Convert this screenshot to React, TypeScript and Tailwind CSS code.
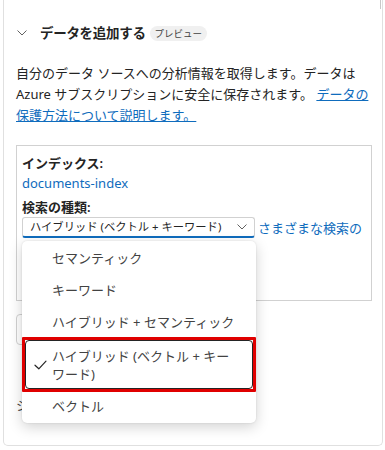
import React from "react";

const font = { fontFamily: '"Noto Sans", "Noto Sans CJK JP", sans-serif' };

function Chevron({ className }: { className?: string }) {
  return (
    <svg className={className} width="10" height="6" viewBox="0 0 10 6" fill="none">
      <path d="M0.8 0.8l4.2 4.2 4.2-4.2" stroke="#616161" strokeWidth="1" strokeLinecap="round" strokeLinejoin="round" />
    </svg>
  );
}

function Check() {
  return (
    <svg width="13" height="10" viewBox="0 0 13 10" fill="none">
      <path d="M1 5.2l3.8 3.6L12 1.2" stroke="#242424" strokeWidth="1.2" strokeLinecap="round" strokeLinejoin="round" />
    </svg>
  );
}

export default function App() {
  return (
    <div className="relative w-[385px] h-[450px] bg-white overflow-hidden text-[#242424]" style={font}>
      <div className="absolute left-[380px] top-0 w-px h-[9px] bg-[#c8c8c8]" />
      <div className="ml-[3px] w-[380px] h-[446px] border-x border-b border-[#e0e0e0] rounded-b-[5px] pl-[12px] pr-[10px] pt-[24px]">
        {/* header */}
        <div className="flex items-center h-[18px]">
          <Chevron className="ml-[1px] mr-[13px]" />
          <span className="text-[13.5px] font-bold leading-[18px] tracking-[-0.3px]">データを追加する</span>
          <span className="ml-[4px] px-[5px] h-[15px] rounded-full bg-[#f0f0f0] text-[9.5px] leading-[15px] text-[#424242]">プレビュー</span>
        </div>

        <p className="mt-[21px] text-[13px] leading-[21px] text-[#242424]">
          自分のデータ ソースへの分析情報を取得します。データは
          <br />
          Azure サブスクリプションに安全に保存されます。{" "}
          <a className="text-[#0f6cbd] underline">データの
          <br />
          保護方法について説明します。</a>
        </p>

        {/* inner box */}
        <div className="mt-[19px] w-[356px] h-[156px] border border-[#d1d1d1] pl-[5px] pt-[7px]">
          <div className="text-[13px] leading-[20px] font-semibold">インデックス:</div>
          <div className="text-[13px] leading-[20px] text-[#0f6cbd]">documents-index</div>
          <div className="mt-[4px] text-[13px] leading-[20px] font-semibold">検索の種類:</div>
          <div className="flex items-center">
            <div className="relative">
              <div className="w-[233px] h-[21px] flex items-center justify-between border border-[#d1d1d1] border-b-2 border-b-[#0f6cbd] rounded-[3px] pl-[7px] pr-[7px]">
                <span className="text-[11.3px] leading-[16px] text-[#242424] whitespace-nowrap">ハイブリッド (ベクトル + キーワード)</span>
                <Chevron className="w-[10px]" />
              </div>
              {/* popup */}
              <div className="absolute z-10 left-0 top-full mt-[3px] w-[234px] bg-white rounded-[5px] shadow-[0_4px_14px_rgba(0,0,0,0.18),0_0_2px_rgba(0,0,0,0.12)] pt-[3px] pb-[2px] flex flex-col gap-[3px] text-[13px] text-[#424242]">
                <div className="h-[29px] flex items-center pl-[30px]">セマンティック</div>
                <div className="h-[29px] flex items-center pl-[30px]">キーワード</div>
                <div className="h-[29px] flex items-center pl-[30px]">ハイブリッド + セマンティック</div>
                <div className="relative mx-[3px] h-[49px] flex items-center border border-[#242424] rounded-[4px]">
                  <span className="absolute -inset-[4px] border-[3px] border-[#e00000] rounded-[1px]" />
                  <span className="w-[26px] flex justify-center pl-[2px]"><Check /></span>
                  <span className="leading-[18px]">ハイブリッド (ベクトル + キー<br />ワード)</span>
                </div>
                <div className="h-[29px] flex items-center pl-[30px]">ベクトル</div>
              </div>
            </div>
            <span className="ml-[3px] text-[13px] leading-[20px] text-[#0f6cbd] whitespace-nowrap">さまざまな検索の</span>
          </div>
        </div>

        <div className="mt-[13px] w-[200px] h-[31px] border border-[#d1d1d1] rounded-[4px]" />
        <div className="mt-[50px] text-[13px] leading-[20px] text-[#424242]">システム メッセージ</div>
      </div>
    </div>
  );
}
